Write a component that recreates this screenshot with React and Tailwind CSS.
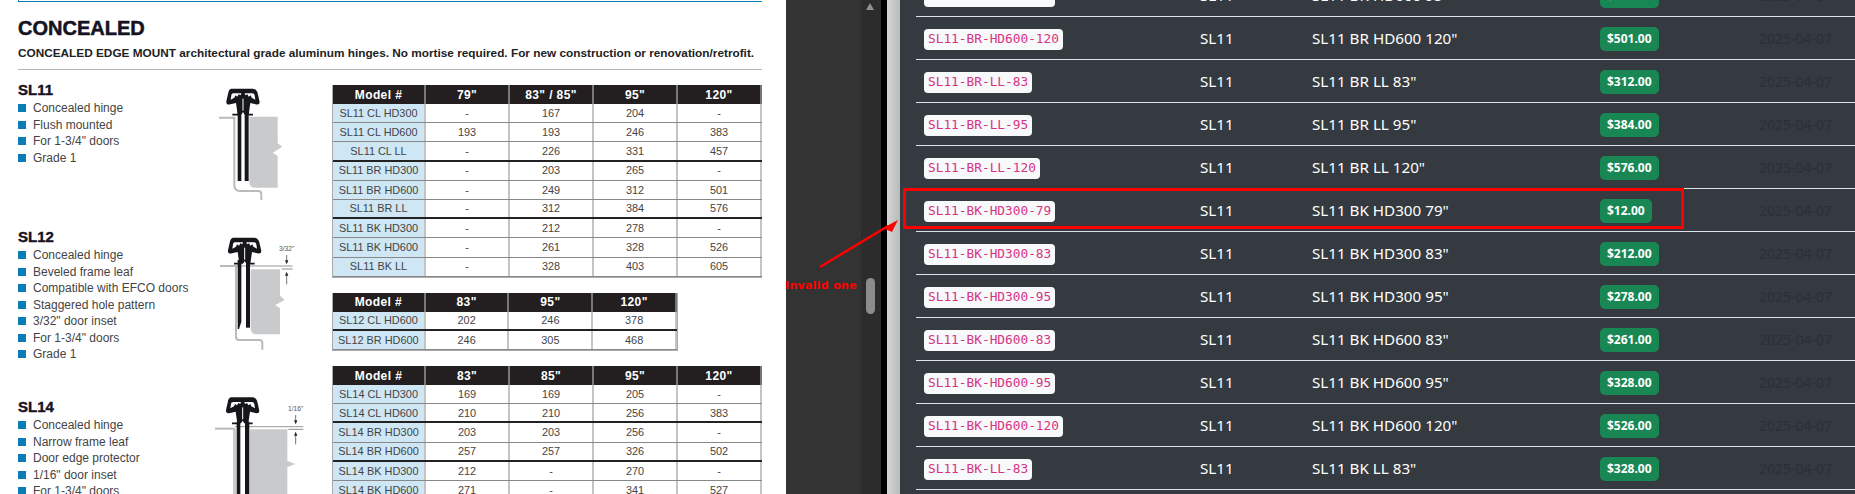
const sans = "font-['Liberation_Sans',Arial,sans-serif]";

function Cap() {
  return (
    <g>
      <path d="M15 0 H80 Q92 1 95 18 L100 40 Q100 50 88 47 L72 43 L67 78 H55 L50 70 L45 78 H34 L29 43 L12 47 Q-1 50 0 38 L5 16 Q7 1 15 0 Z" fill="#16171a" />
      <path d="M21 14 H45 L43 20 L37 17 L33 24 L27 20 L24 27 L13 33 L15 20 Q15 14 21 14 Z" fill="#fff" />
      <path d="M55 14 H78 Q84 14 85 20 L87 33 L76 27 L73 20 L67 24 L63 17 L57 20 Z" fill="#fff" />
      <path d="M50 30 V66" stroke="#fff" strokeWidth="3" />
      <path d="M18 78 H40 M60 78 H80" stroke="#16171a" strokeWidth="5" />
    </g>
  );
}

function Dim({ x, y, label }) {
  return (
    <g>
      <text x={x} y={y} fontSize="20" textAnchor="middle" fill="#555" fontFamily="Liberation Sans, sans-serif">{label}</text>
      <path d={`M${x} ${y + 12} V${y + 36}`} stroke="#333" strokeWidth="2" />
      <path d={`M${x - 5} ${y + 28} H${x + 5} L${x} ${y + 40} Z`} fill="#222" />
      <path d={`M${x - 5} ${y + 74} H${x + 5} L${x} ${y + 62} Z`} fill="#222" />
      <path d={`M${x} ${y + 72} V${y + 100}`} stroke="#333" strokeWidth="2" />
    </g>
  );
}

function HingeA() {
  return (
    <svg viewBox="0 0 360 390" className="w-[120px] h-[130px] shrink-0">
      <path d="M148 110 H233 V190 L247 200 L218 218 L233 228 V323 H165 Q148 323 148 305 Z" fill="#c9cacc" />
      <path d="M57 113 H103 V315 Q103 333 120 333 H175 Q184 333 184 342 V360" stroke="#b9babc" strokeWidth="6" fill="none" />
      <rect x="113" y="95" width="11" height="208" fill="#16171a" />
      <rect x="134" y="95" width="12" height="208" fill="#16171a" />
      <g transform="translate(79 26)"><Cap /></g>
    </svg>
  );
}

function HingeB() {
  return (
    <svg viewBox="0 0 360 390" className="w-[120px] h-[130px] shrink-0">
      <path d="M152 133 H240 V212 L254 225 L226 240 L240 250 V328 H170 Q152 328 152 310 Z" fill="#c9cacc" />
      <path d="M60 123 H108 V335 Q108 345 118 345 H178 Q187 345 187 354 V374" stroke="#b9babc" strokeWidth="6" fill="none" />
      <path d="M108 123 H278" stroke="#b9babc" strokeWidth="4" />
      <path d="M245 132 H278" stroke="#555" strokeWidth="2" />
      <path d="M113 105 H124 V290 L117 312 H113 Z" fill="#16171a" />
      <rect x="138" y="105" width="12" height="203" fill="#16171a" />
      <g transform="translate(84 38)"><Cap /></g>
      <Dim x={260} y={78} label={'3/32"'} />
    </svg>
  );
}

function HingeC() {
  return (
    <svg viewBox="0 0 360 390" className="w-[120px] h-[130px] shrink-0">
      <path d="M150 118 H262 V212 L285 222 L262 232 V390 H150 Z" fill="#c9cacc" />
      <path d="M45 116 H105" stroke="#b9babc" strokeWidth="6" />
      <path d="M105 110 H310" stroke="#999" strokeWidth="3" />
      <path d="M265 118 H310" stroke="#555" strokeWidth="2" />
      <rect x="99" y="116" width="9" height="274" fill="#c9cacc" />
      <rect x="110" y="95" width="11" height="295" fill="#16171a" />
      <rect x="135" y="95" width="13" height="295" fill="#16171a" />
      <g transform="translate(78 22)"><Cap /></g>
      <Dim x={287} y={63} label={'1/16"'} />
    </svg>
  );
}

function Spec({ title, items, hinge, height, pad }) {
  return (
    <div className={`flex ${height}`}>
      <div className={`w-[182px] ${pad}`}>
        <div className={`${sans} h-[18px] leading-[18px] text-[15px] font-bold text-[#15131f] [-webkit-text-stroke:0.4px_#15131f]`}>{title}</div>
        <ul className="mt-[1px]">
          {items.map((t) => (
            <li key={t} className={`${sans} h-[16.5px] leading-[16.5px] flex items-center gap-[7px] text-[12px] text-[#444]`}>
              <span className="w-2 h-2 bg-[#0a7db5]" />
              {t}
            </li>
          ))}
        </ul>
      </div>
      {hinge}
    </div>
  );
}

function PriceTable({ head, rows, cls }) {
  return (
    <div className={`${sans} ${cls} border-l border-b border-[#aaa] overflow-hidden`}>
      <div className="flex h-[19px] bg-[#231f20] text-white font-bold text-[12px] tracking-[0.4px]">
        {head.map((h, i) => (
          <div key={i} className={`${i === 0 ? "w-[93px]" : "w-[84px]"} flex items-center justify-center border-r-2 border-[#777] box-border`}>{h}</div>
        ))}
      </div>
      {rows.map((r, ri) => (
        <div key={ri} className={`flex h-[19.2px] box-border text-[10.9px] text-[#444] ${r.thick ? "border-b-2 border-[#222]" : "border-b border-[#888]"}`}>
          {r.c.map((v, i) => (
            <div key={i} className={`${i === 0 ? "w-[93px] bg-[#cfe6f5]" : "w-[84px]"} flex items-center justify-center border-r-2 border-[#c4c4c4] box-border`}>{v}</div>
          ))}
        </div>
      ))}
    </div>
  );
}

const t1 = [
  { c: ["SL11 CL HD300", "-", "167", "204", "-"] },
  { c: ["SL11 CL HD600", "193", "193", "246", "383"] },
  { c: ["SL11 CL LL", "-", "226", "331", "457"], thick: true },
  { c: ["SL11 BR HD300", "-", "203", "265", "-"] },
  { c: ["SL11 BR HD600", "-", "249", "312", "501"] },
  { c: ["SL11 BR LL", "-", "312", "384", "576"], thick: true },
  { c: ["SL11 BK HD300", "-", "212", "278", "-"] },
  { c: ["SL11 BK HD600", "-", "261", "328", "526"] },
  { c: ["SL11 BK LL", "-", "328", "403", "605"] },
];
const t2 = [
  { c: ["SL12 CL HD600", "202", "246", "378"], thick: true },
  { c: ["SL12 BR HD600", "246", "305", "468"] },
];
const t3 = [
  { c: ["SL14 CL HD300", "169", "169", "205", "-"] },
  { c: ["SL14 CL HD600", "210", "210", "256", "383"], thick: true },
  { c: ["SL14 BR HD300", "203", "203", "256", "-"] },
  { c: ["SL14 BR HD600", "257", "257", "326", "502"], thick: true },
  { c: ["SL14 BK HD300", "212", "-", "270", "-"] },
  { c: ["SL14 BK HD600", "271", "-", "341", "527"] },
];

const rows = [
  ["SL11-BR-HD600-95", 'SL11 BR HD600 95"', "$312.00"],
  ["SL11-BR-HD600-120", 'SL11 BR HD600 120"', "$501.00"],
  ["SL11-BR-LL-83", 'SL11 BR LL 83"', "$312.00"],
  ["SL11-BR-LL-95", 'SL11 BR LL 95"', "$384.00"],
  ["SL11-BR-LL-120", 'SL11 BR LL 120"', "$576.00"],
  ["SL11-BK-HD300-79", 'SL11 BK HD300 79"', "$12.00"],
  ["SL11-BK-HD300-83", 'SL11 BK HD300 83"', "$212.00"],
  ["SL11-BK-HD300-95", 'SL11 BK HD300 95"', "$278.00"],
  ["SL11-BK-HD600-83", 'SL11 BK HD600 83"', "$261.00"],
  ["SL11-BK-HD600-95", 'SL11 BK HD600 95"', "$328.00"],
  ["SL11-BK-HD600-120", 'SL11 BK HD600 120"', "$526.00"],
  ["SL11-BK-LL-83", 'SL11 BK LL 83"', "$328.00"],
  ["SL11-BK-LL-95", 'SL11 BK LL 95"', "$403.00"],
];

export default function App() {
  return (
    <div className="relative flex w-[1855px] h-[494px] overflow-hidden bg-white">
      {/* PDF page */}
      <div className={`${sans} w-[786px] shrink-0 bg-white pl-[18px]`}>
        <div className="w-[744px] h-[2px] border-l border-b border-[#0a7db5]" />
        <div className="mt-[15px] h-[22px] leading-[22px] text-[20px] font-bold text-[#15131f] [-webkit-text-stroke:0.5px_#15131f]">CONCEALED</div>
        <div className="mt-[6px] h-[16px] leading-[16px] text-[11.8px] font-bold text-[#222] whitespace-nowrap">
          CONCEALED EDGE MOUNT architectural grade aluminum hinges. No mortise required. For new construction or renovation/retrofit.
        </div>
        <div className="mt-[8px] w-[744px] h-[1px] bg-[#b5b5b5]" />
        <div className="flex mt-[10px]">
          <div className="w-[314px] shrink-0">
            <Spec title="SL11" height="h-[145px]" pad="pt-[1px]" hinge={<HingeA />} items={["Concealed hinge", "Flush mounted", 'For 1-3/4" doors', "Grade 1"]} />
            <Spec title="SL12" height="h-[165px]" pad="pt-[3px]" hinge={<HingeB />} items={["Concealed hinge", "Beveled frame leaf", "Compatible with EFCO doors", "Staggered hole pattern", '3/32" door inset', 'For 1-3/4" doors', "Grade 1"]} />
            <Spec title="SL14" height="h-[104px]" pad="pt-[8px]" hinge={<HingeC />} items={["Concealed hinge", "Narrow frame leaf", "Door edge protector", '1/16" door inset', 'For 1-3/4" doors']} />
          </div>
          <div className="w-[430px] pt-[5px]">
            <PriceTable cls="w-[430px]" head={["Model #", '79"', '83" / 85"', '95"', '120"']} rows={t1} />
            <PriceTable cls="w-[346px] mt-[15px] border-r border-[#aaa]" head={["Model #", '83"', '95"', '120"']} rows={t2} />
            <PriceTable cls="w-[430px] mt-[15px]" head={["Model #", '83"', '85"', '95"', '120"']} rows={t3} />
          </div>
        </div>
      </div>

      {/* Viewer gutter with scrollbar */}
      <div className="w-[75px] shrink-0 bg-[#333333]" />
      <div className="w-[20px] shrink-0 bg-[#2c2c2c] flex flex-col items-center pr-[2px] pt-[3px]">
        <div className="w-0 h-0 border-l-[4.5px] border-r-[4.5px] border-b-[7px] border-l-transparent border-r-transparent border-b-[#909090]" />
        <div className="w-[9px] h-[36px] mt-[268px] rounded-full bg-[#8c8c8c]" />
      </div>
      <div className="w-[6px] shrink-0 bg-black" />
      <div className="w-[13px] shrink-0 bg-gradient-to-r from-[#d4d5d5] to-[#b9bbbb]" />

      {/* Admin table */}
      <div className="flex-1 bg-[#343a40] pl-[16px] overflow-hidden">
        <div className="-mt-[26px]">
          {rows.map(([sku, desc, price]) => (
            <div key={sku} className="grid grid-cols-[276px_112px_288px_159px_1fr] items-center h-[43px] box-border border-b border-[#dee2e6] px-2 font-['Noto_Sans',sans-serif] text-[15.2px] text-white">
              <div>
                <span className="inline-flex items-center h-[21px] px-[4px] rounded-[4px] bg-[#f8f9fa] text-[#d63384] font-['DejaVu_Sans_Mono',monospace] text-[12.8px]">{sku}</span>
              </div>
              <div>SL11</div>
              <div>{desc}</div>
              <div>
                <span className="inline-flex items-center h-[24px] px-[7px] rounded-[5px] bg-[#198754] text-white text-[12px] font-bold">{price}</span>
              </div>
              <div className="text-[#2b3036] text-[14px]">2025-04-07</div>
            </div>
          ))}
        </div>
      </div>

      {/* Annotations */}
      <div className="absolute left-[903px] top-[188px] w-[781px] h-[41px] border-[3px] border-[#ff0000] pointer-events-none" />
      <svg className="absolute left-0 top-0 w-[1855px] h-[494px] pointer-events-none" viewBox="0 0 1855 494">
        <path d="M820 267 L888 226" stroke="#f00" strokeWidth="2.5" />
        <path d="M883 228 L898 220 L892 232 Z" fill="#f00" />
      </svg>
      <div className="absolute left-[785px] top-[278px] text-[11px] leading-[16px] font-bold tracking-[0.3px] text-[#ff0000] font-['DejaVu_Sans',sans-serif] whitespace-nowrap">Invalid one</div>
    </div>
  );
}
